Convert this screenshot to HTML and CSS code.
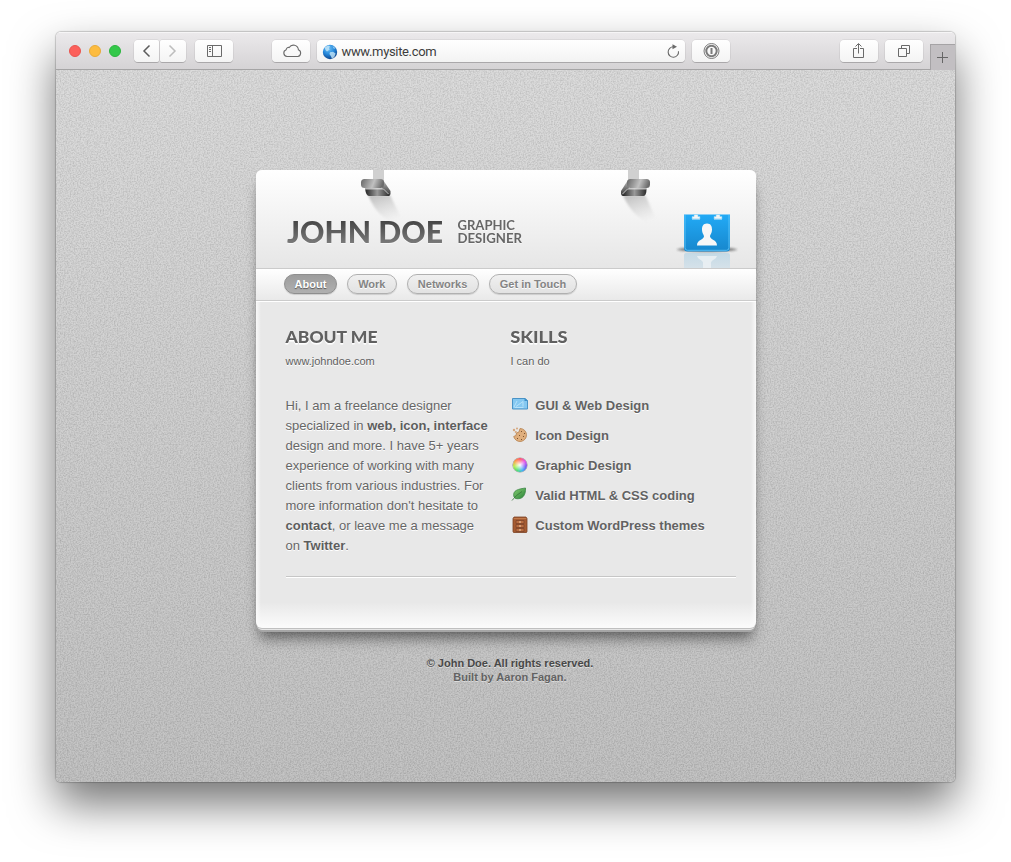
FILE: index.html
```html
<!DOCTYPE html>
<html lang="en">
<head>
<meta charset="utf-8">
<title>John Doe</title>
<link rel="stylesheet" href="styles.css">
</head>
<body>
<div class="window">
  <header class="toolbar">
    <div class="lights"><i class="red"></i><i class="yellow"></i><i class="green"></i></div>
    <div class="pair">
      <span class="btn"><svg width="26" height="22" fill="none" stroke="#5c5c5c" stroke-width="1.500"><path d="M15.500 5.500 10 11l5.500 5.500"/></svg></span>
      <span class="btn"><svg width="26" height="22" fill="none" stroke="#bdbdbd" stroke-width="1.500"><path d="M9.500 5.500 15 11 9.500 16.500"/></svg></span>
    </div>
    <span class="btn wide side"><svg width="38" height="22" fill="none" stroke="#6a6a6a"><path d="M12.500 5.500h14v11h-14zM17.500 5.500v11M14 7.500h2M14 9.500h2M14 11.500h2"/></svg></span>
    <span class="btn wide cloud"><svg width="38" height="22" fill="none" stroke="#6a6a6a" stroke-width="1.100"><path d="M15 16.500a3.500 3.500 0 0 1-.8-6.800 2.400 2.400 0 0 1 3-2.200 5 5 0 0 1 9.200 2.300 3.500 3.500 0 0 1-.6 6.700z"/></svg></span>
    <div class="address">
      <svg class="globe" width="16" height="16" viewBox="0 0 16 16"><defs><radialGradient id="gl" cx=".4" cy=".25" r=".8"><stop offset="0" stop-color="#72c2f5"/><stop offset=".5" stop-color="#2689dc"/><stop offset="1" stop-color="#0b3c84"/></radialGradient></defs><circle cx="8" cy="8" r="7.200" fill="url(#gl)"/><path d="M2.500 3.500 6 1.500l2 .8-1 2 .7 1.200L5 7.500 3.500 6zM8 8.200l3-.4 2.600 1.700-1.300 3.400-2.300 1.800-1.200-2.700L7.400 10zM10.500 2l3 2.300-1.600.5z" fill="#c6e6f8" opacity=".8"/></svg>
      <span class="url">www.mysite.com</span>
      <svg class="reload" width="14" height="16" fill="none" stroke="#6a6a6a" stroke-width="1.100"><path d="M12.500 7.300A5.200 5.200 0 1 1 7.500 2.800"/><path d="M6.500 .3 11 2.800 6.500 5.300z" fill="#6a6a6a" stroke="none"/></svg>
    </div>
    <span class="btn wide key"><svg width="38" height="22" fill="none" stroke="#7b7b7b"><circle cx="19.500" cy="11" r="7.500"/><circle cx="19.500" cy="11" r="5.200" stroke-width="2"/><path d="M19.500 8v6" stroke-width="2"/></svg></span>
    <span class="btn wide share"><svg width="38" height="22" fill="none" stroke="#6a6a6a"><path d="M17 8.500h-3.500v9h10v-9H20M18.500 13.500V4M15.500 6.500l3-3 3 3"/></svg></span>
    <span class="btn wide tabs"><svg width="38" height="22" fill="none" stroke="#6a6a6a"><path d="M13.500 8.500h8v8h-8zM16.500 8V5.500h8v8H22"/></svg></span>
    <span class="plus"><svg width="25" height="25" stroke="#666"><path d="M6 12.500h11M11.500 7v11"/></svg></span>
  </header>
  <main class="page">
    <svg class="grain" width="900" height="712"><filter id="n" x="0" y="0" width="100%" height="100%" color-interpolation-filters="sRGB"><feTurbulence type="fractalNoise" baseFrequency=".7" numOctaves="2" seed="4"/><feColorMatrix values="1.600 0 0 0 -.05 1.600 0 0 0 -.05 1.600 0 0 0 -.05 0 0 0 0 .14"/></filter><rect width="900" height="712" filter="url(#n)"/></svg>
    <article class="card">
      <svg class="clips" width="420" height="70" viewBox="0 0 420 70">
        <defs>
          <linearGradient id="sh" x1="0" y1="0" x2=".4" y2="1"><stop offset="0" stop-color="#999" stop-opacity=".65"/><stop offset="1" stop-color="#bbb" stop-opacity="0"/></linearGradient>
          <linearGradient id="mt" x1="0" y1="0" x2="1" y2=".15"><stop offset="0" stop-color="#666"/><stop offset=".6" stop-color="#c0c0c0"/><stop offset="1" stop-color="#6c6c6c"/></linearGradient>
          <linearGradient id="md" x1="0" x2="1"><stop offset="0" stop-color="#222"/><stop offset=".5" stop-color="#999"/><stop offset="1" stop-color="#2c2c2c"/></linearGradient>
          <linearGradient id="ms" x1="0" y1="0" x2="0" y2="1"><stop offset="0" stop-color="#bbb"/><stop offset="1" stop-color="#333"/></linearGradient>
          <filter id="bl" x="-20%" width="140%"><feGaussianBlur stdDeviation="1.300"/></filter>
        </defs>
        <path d="M18 25h22c4 8 8 17 15 29-16 0-28-8-37-29z" fill="url(#sh)" filter="url(#bl)"/>
        <path d="M23 0h11v11H23z" fill="#d0d0d0"/>
        <path d="M33 10 40.500 21v3q-.5 2-2 2L32 18z" fill="url(#ms)"/>
        <path d="M15 18.500h18.500L39.500 26H19q-3 0-4-7.500z" fill="url(#md)"/>
        <path d="M15 19h18.500l5 5" fill="none" stroke="#ddd" stroke-width=".8"/>
        <rect x="11" y="9" width="23" height="9" rx="3.500" fill="url(#mt)"/>
        <path d="M273 25h22c5 9 7 17 14 30-16-1-29-13-36-30z" fill="url(#sh)" filter="url(#bl)"/>
        <path d="M278 0h11v11h-11z" fill="#d0d0d0"/>
        <path d="M278 10 271 21v3q.5 2 2 2l6-8z" fill="url(#ms)"/>
        <path d="M277.500 18.500h19q0 7.500-3 7.500h-21z" fill="url(#md)"/>
        <path d="M272.500 24l5-5h19" fill="none" stroke="#ddd" stroke-width=".8"/>
        <rect x="277" y="9" width="23" height="9" rx="3.500" fill="url(#mt)"/>
      </svg>
      <div class="masthead">
        <svg class="name" width="250" height="32" viewBox="0 0 250 32">
          <defs><linearGradient id="tx" x1="0" y1="0" x2="0" y2="1"><stop offset=".2" stop-color="#444"/><stop offset=".85" stop-color="#7b7b7b"/></linearGradient></defs>
          <text class="big" x="1" y="26" font-size="30.500" textLength="156" lengthAdjust="spacingAndGlyphs" fill="url(#tx)">JOHN DOE</text>
          <text x="171.500" y="13" font-size="12.500" textLength="57.500" lengthAdjust="spacingAndGlyphs" fill="#666">GRAPHIC</text>
          <text x="171.500" y="26" font-size="12.500" textLength="64.500" lengthAdjust="spacingAndGlyphs" fill="#666">DESIGNER</text>
        </svg>
        <svg class="contact" width="66" height="55" viewBox="0 0 66 55">
          <defs>
            <linearGradient id="cb" x1="0" y1="0" x2="0" y2="1"><stop offset="0" stop-color="#22aaf6"/><stop offset="1" stop-color="#1787cd"/></linearGradient>
            <linearGradient id="rf" x1="0" y1="0" x2="0" y2="1"><stop offset="0" stop-color="#b8d4e4"/><stop offset="1" stop-color="#cfe0ea"/></linearGradient>
            <filter id="b2" x="-20%" y="-100%" width="140%" height="300%"><feGaussianBlur stdDeviation="1.200"/></filter>
          </defs>
          <ellipse cx="33" cy="36.500" rx="30" ry="2.200" fill="#333" opacity=".6" filter="url(#b2)"/>
          <path d="M10 42q0-2 2-2h42q2 0 2 2v13H10z" fill="url(#rf)" opacity=".75"/>
          <path d="M23 43h20c-1 4-7 4-6 8v4h-8v-4c1-4-5-4-6-8z" fill="#eaf0f3" opacity=".9"/>
          <path d="M10 1.500h10v2h-2v3h8v-3h-2v-2h18v2h-2v3h8v-3h-2v-2h10v33.500q0 3.500-3.500 3.500h-39q-3.500 0-3.500-3.500z" fill="url(#cb)"/>
          <path d="M18 3.500h2v-2h4v2h2v2.500h-8zM40 3.500h2v-2h4v2h2v2.500h-8z" fill="#f4f4f4" stroke="#65c9fb" stroke-width=".6"/>
          <path d="M11 2v32.500q0 2.800 2.500 2.800h39q2.500 0 2.500-2.800V2" fill="none" stroke="#65c9fb" stroke-width=".8"/>
          <path d="M33 10.500c4 0 5 3 5 6 0 4-2 5-2 7 1 4 7 3 7 9H23c0-6 6-5 7-9 0-2-2-3-2-7 0-3 1-6 5-6z" fill="#f7f7f7"/>
        </svg>
      </div>
      <nav class="nav">
        <a class="pill on">About</a><a class="pill">Work</a><a class="pill">Networks</a><a class="pill">Get in Touch</a>
      </nav>
      <div class="columns">
        <section class="about">
          <svg class="title" width="120" height="18"><text x="-.5" y="15" font-size="16.500" textLength="92" lengthAdjust="spacingAndGlyphs" fill="#606060">ABOUT ME</text></svg>
          <p class="sub">www.johndoe.com</p>
          <p class="bio">Hi, I am a freelance designer<br>specialized in <b>web, icon, interface</b><br>design and more. I have 5+ years<br>experience of working with many<br>clients from various industries. For<br>more information don't hesitate to<br><b>contact</b>, or leave me a message<br>on <b>Twitter</b>.</p>
        </section>
        <section class="skills">
          <svg class="title" width="120" height="18"><text x="-.8" y="15" font-size="16.500" textLength="57.500" lengthAdjust="spacingAndGlyphs" fill="#606060">SKILLS</text></svg>
          <p class="sub">I can do</p>
          <ul class="list">
            <li><svg width="18" height="18"><path d="M1.500 3.500h12.500l2.500 2v8.500h-15z" fill="#85c8f1" stroke="#4a93c6"/><path d="M3 12l3-6M3.500 12.500h9M5 11.500l7-5v5" fill="none" stroke="#c3e7fb" stroke-width=".8"/><path d="M13.500 3v3h3.500z" fill="#3e8fc8"/></svg>GUI &amp; Web Design</li>
            <li><svg width="18" height="18"><path d="M9 3.500a6.500 6.500 0 1 1-6.300 8l2.300-1 .5-2.500 2.500-1z" fill="#dfae7c" stroke="#b5804e" stroke-width=".8"/><circle cx="3" cy="5" r="1.200" fill="#d5a67c"/><circle cx="6" cy="3.500" r="1" fill="#d5a67c"/><circle cx="4.800" cy="7" r="1.100" fill="#d5a67c"/><path d="M10 6h1v1h-1zM13 8h1v1h-1zM8 10h1v1H8zM12 11h1v1h-1zM6 13h1v1H6zM10 14h1v1h-1z" fill="#7c5230"/></svg>Icon Design</li>
            <li><span class="wheel"></span>Graphic Design</li>
            <li><svg width="18" height="18"><defs><linearGradient id="lf" x1="0" y1="0" x2="1" y2="1"><stop offset="0" stop-color="#89cf72"/><stop offset="1" stop-color="#278238"/></linearGradient></defs><path d="M3 12C1 5 8 4 14.500 3c.5 7-3 12-10 10.500z" fill="url(#lf)" stroke="#3b8745" stroke-width=".8"/><path d="M1 15.500Q5 10 11 6.500" fill="none" stroke="#39743a" stroke-width=".8"/></svg>Valid HTML &amp; CSS coding</li>
            <li><svg width="18" height="18"><path d="M2 3.500 3 2h12l1 1.500v13l-.5 1h-13l-.5-1z" fill="#a65c32" stroke="#7b4225" stroke-width=".8"/><path d="M5 5.500h8v3H5zM5 9.500h8v3H5zM5 13.500h8v3H5z" fill="#b86d41" stroke="#7d452b" stroke-width=".8"/><path d="M8 7h2M8 11h2M8 15h2" stroke="#f1cfac"/><path d="M3 3.500h12" stroke="#c37a4b"/></svg>Custom WordPress themes</li>
          </ul>
        </section>
      </div>
      <hr class="rule">
    </article>
    <footer class="foot"><div class="copy">© John Doe. All rights reserved.</div><div>Built by Aaron Fagan.</div></footer>
  </main>
</div>
</body>
</html>
```
FILE: styles.css
```css
* { box-sizing: border-box; }
body { margin: 0; width: 1011px; height: 862px; padding: 32px 0 0 56px; background: #fff; overflow: hidden; font-family: "Liberation Sans", Arial, sans-serif; color: #666; }
svg { display: block; flex: none; overflow: visible; }
.window { width: 899px; height: 750px; border-radius: 5px; box-shadow: 0 22px 45px rgba(0,0,0,.55), 0 0 1px 1px rgba(0,0,0,.18); overflow: hidden; display: flex; flex-direction: column; }
.toolbar { flex: none; height: 38px; display: flex; align-items: flex-start; padding-top: 7px; background: linear-gradient(#ebe9eb, #d5d3d5); border-top: 1px solid #f6f5f6; border-bottom: 1px solid #a5a4a5; }
.lights { display: flex; gap: 8px; padding: 5px 0 0 13px; width: 78px; }
.lights i { width: 12px; height: 12px; border-radius: 50%; border: 1px solid; }
.red { background: #fc605b; border-color: #e9544f !important; }
.yellow { background: #fdbc40; border-color: #e9ab38 !important; }
.green { background: #34c84a; border-color: #2bb53e !important; }
.pair { display: flex; gap: 1px; margin-left: -.5px; }
.btn { height: 22px; width: 25.5px; border-radius: 4px; background: linear-gradient(#fff, #f4f4f4); box-shadow: 0 0 0 .5px rgba(0,0,0,.1), 0 1px 0 rgba(0,0,0,.17); }
.pair .btn:first-child { border-radius: 4px 2px 2px 4px; }
.pair .btn:last-child { border-radius: 2px 4px 4px 2px; }
.wide { width: 38px; }
.side { margin-left: 9px; }
.cloud { margin-left: 39px; }
.address { width: 368px; height: 22px; margin-left: 7px; border-radius: 4px; background: linear-gradient(#fff, #f3f3f3); box-shadow: 0 0 0 .5px rgba(0,0,0,.1), 0 1px 0 rgba(0,0,0,.17); display: flex; align-items: center; padding: 1px 5px 0 5px; }
.url { font: 13px/22px Roboto, "Liberation Sans", sans-serif; color: #3d3d3d; margin-left: 4px; flex: 1; letter-spacing: -.34px; }
.key { margin-left: 7px; }
.share { margin-left: 110px; }
.tabs { margin-left: 7px; }
.plus { margin: 4px 0 0 auto; width: 25px; height: 26px; background: #c2bfc2; border: 1px solid #a5a3a5; border-width: 1px 0 0 1px; }
.page { position: relative; flex: 1; background: linear-gradient(#d6d6d6, #b9b9b9); padding: 100px 0 0 200px; }
.grain { position: absolute; left: 0; top: 0; }
.card { position: relative; width: 500px; height: 458px; border-radius: 6px; background: linear-gradient(transparent 432px, #fbfbfb 457px), linear-gradient(90deg, #f9f9f9, #e8e8e8 5px, #e8e8e8 495px, #f9f9f9); box-shadow: 0 1px 0 #c0c0c0, 0 3px 0 -1px #e6e6e6, 0 5px 0 -1px #a6a6a6, 0 14px 14px -4px rgba(0,0,0,.5), 0 3px 4px rgba(0,0,0,.08); }
.clips { position: absolute; left: 94px; top: 0; }
.masthead { height: 99px; padding: 43px 16px 0 30px; display: flex; justify-content: space-between; border-radius: 6px 6px 0 0; background: linear-gradient(#fff, #e6e6e6); border-bottom: 1px solid #cbcbcb; }
.name, .title { font-family: Lato, sans-serif; font-weight: 900; filter: drop-shadow(0 1px 0 rgba(255,255,255,.6)); }
.name { margin-top: 4px; }
.name text { font-weight: 700; }
.name .big { font-weight: 900; }
.nav { height: 32px; display: flex; gap: 10px; padding: 5px 0 0 28px; background: linear-gradient(#fff, #e9e9e9); border-bottom: 1px solid #cbcbcb; box-shadow: 0 1px 0 #fff; }
.pill { height: 20px; padding: 0 10.200px; border: 1px solid #b0b0b0; border-radius: 10px; font: bold 11px/18px "Liberation Sans", Arial, sans-serif; color: #848484; background: linear-gradient(#f0f0f0, #e2e2e2); text-shadow: 0 1px 0 #fff; box-shadow: 0 1px 1px rgba(0,0,0,.14); }
.pill.on { padding: 0 9.600px; color: #fff; background: linear-gradient(#9c9c9c, #b0b0b0); border-color: #8e8e8e; text-shadow: 0 1px 1px #555; }
.columns { display: flex; padding: 27px 0 0 29.500px; height: 275px; text-shadow: 0 1px 0 #fff; }
.about { width: 225px; }
.sub { margin: 8px 0 0; font-size: 11px; line-height: 14px; color: #606060; }
.bio { margin: 28px 0 0; font-size: 13px; line-height: 20px; white-space: nowrap; }
b { color: #5d5d5d; }
.list { list-style: none; margin: 22px 0 0; padding: 0; }
.list li { height: 30px; display: flex; align-items: center; gap: 6px; padding-left: .8px; font-weight: bold; font-size: 13px; color: #626262; white-space: nowrap; }
.list svg { margin-top: -2px; }
.wheel { flex: none; width: 14px; height: 14px; margin: 0 2px; border-radius: 50%; background: radial-gradient(#fff, transparent 65%), conic-gradient(#ff4f5b, #e84be8, #744df1, #38a9f7, #45df70, #b2ec43, #ff9a40, #ff4f5b); box-shadow: 0 0 0 .6px #999; }
.rule { height: 2px; margin: 0 20px 0 30px; border: 0; border-top: 1px solid #c6c6c6; border-bottom: 1px solid #fff; }
.foot { position: relative; width: 500px; margin: 28px 0 0 4px; text-align: center; font: bold 11px/14px "Liberation Sans", Arial, sans-serif; color: #626262; text-shadow: 0 1px 0 rgba(255,255,255,.45); }
.copy { color: #484848; }
```
